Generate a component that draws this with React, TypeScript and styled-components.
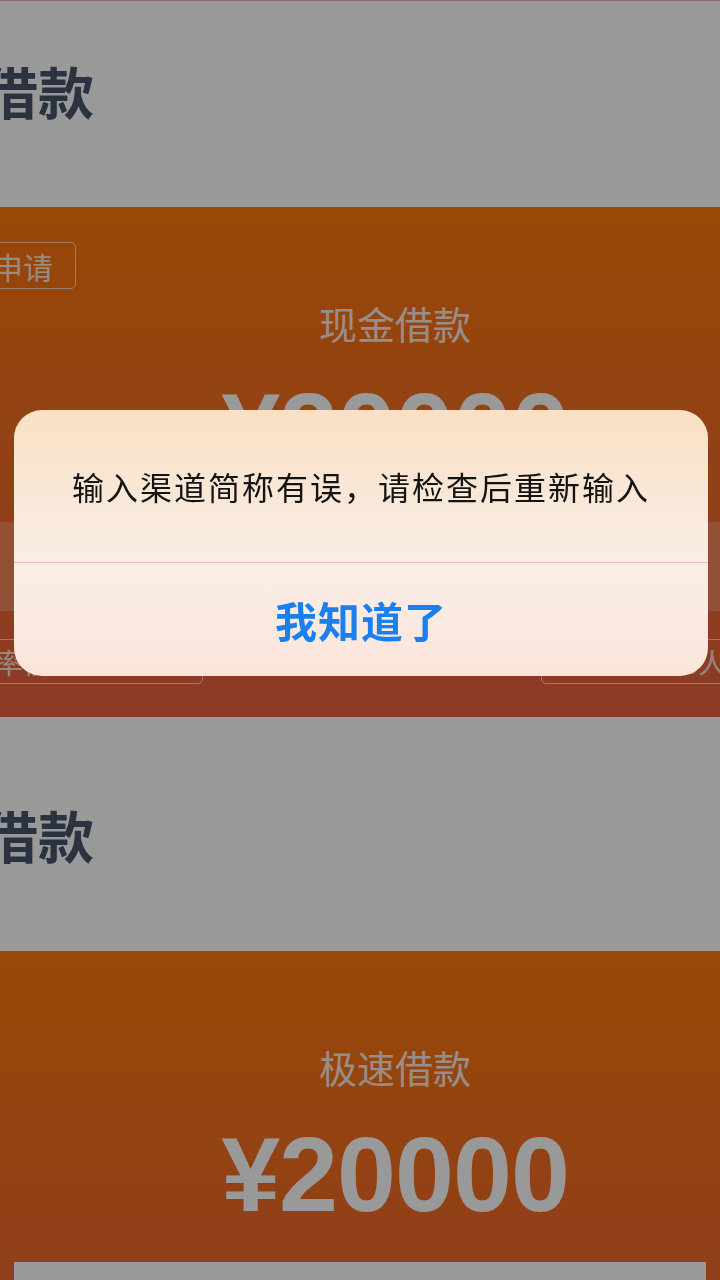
import React from 'react'
import styled, { createGlobalStyle } from 'styled-components'

const GlobalStyle = createGlobalStyle`
  html, body {
    margin: 0;
    padding: 0;
    width: 720px;
    overflow: hidden;
    background: #fff;
    font-family: "Noto Sans CJK SC", "Noto Sans", sans-serif;
  }
`

const Page = styled.div`
  width: 720px;
  margin-top: -27px;
  overflow: hidden;
`

const Section = styled.div`
  height: 234px;
  display: flex;
  align-items: center;
  background: #fff;
`

const Title = styled.h1`
  margin: 0 0 0 -130px;
  font-size: 56px;
  font-weight: 700;
  line-height: 1.2;
  color: #4a566b;
  white-space: nowrap;
`

const Card = styled.div<{ $full?: boolean }>`
  position: relative;
  overflow: hidden;
  padding: 91px 0 ${(p) => (p.$full ? '33px' : '0')};
  background: linear-gradient(180deg, #ff780a 0, #e86141 511px);
  ${(p) => (p.$full ? '' : 'height: 420px; box-sizing: border-box;')}
`

const Badge = styled.span`
  position: absolute;
  top: 35px;
  left: -90px;
  height: 45px;
  padding: 0 22px;
  display: flex;
  align-items: center;
  border: 1px solid rgba(255, 255, 255, 0.7);
  border-radius: 5px;
  font-size: 30px;
  color: rgba(255, 255, 255, 0.85);
  white-space: nowrap;
`

const Center = styled.div`
  padding-left: 70px;
  display: flex;
  flex-direction: column;
  align-items: center;
`

const Name = styled.div`
  font-size: 38px;
  line-height: 50px;
  color: rgba(255, 255, 255, 0.88);
`

const Amount = styled.div`
  margin-top: 29px;
  font-family: "Liberation Sans", Arial, sans-serif;
  font-size: 106px;
  font-weight: 700;
  line-height: 1;
  color: #fff;
  letter-spacing: -1px;
`

const Band = styled.div`
  margin-top: 39px;
  height: 89px;
  background: rgba(255, 255, 255, 0.2);
`

const Panel = styled.div`
  margin: 35px 14px 0;
  height: 120px;
  background: #fff;
`

const TagRow = styled.div`
  margin: 28px 0 0 -60px;
  display: flex;
  gap: 338px;
`

const Tag = styled.div<{ $w: number; $align: string; $pad: number }>`
  flex: none;
  width: ${(p) => p.$w}px;
  height: 45px;
  box-sizing: border-box;
  padding: 0 ${(p) => p.$pad}px;
  display: flex;
  align-items: center;
  justify-content: ${(p) => p.$align};
  border: 1px solid rgba(255, 255, 255, 0.7);
  border-radius: 5px;
  font-size: 28px;
  color: rgba(255, 255, 255, 0.8);
  white-space: nowrap;
`

const Mask = styled.div`
  position: fixed;
  inset: 0;
  background: rgba(0, 0, 0, 0.4);
  border-top: 1px solid #8a6e60;
`

const Alert = styled.div`
  position: fixed;
  top: 410px;
  left: 14px;
  width: 694px;
  border-radius: 28px;
  overflow: hidden;
  background: linear-gradient(
    180deg,
    #fae0c3 0%,
    #f9e7d6 30%,
    #f9eee4 55%,
    #faece4 72%,
    #fbe4da 100%
  );
`

const Message = styled.div`
  height: 152px;
  display: flex;
  align-items: center;
  justify-content: center;
  font-size: 32px;
  letter-spacing: 2px;
  color: #141414;
  border-bottom: 1px solid #e6bda8;
`

const OkButton = styled.button`
  display: block;
  width: 100%;
  height: 113px;
  border: none;
  background: transparent;
  font-family: "Noto Sans CJK SC", sans-serif;
  font-size: 42px;
  font-weight: 700;
  letter-spacing: 1px;
  color: #1a80f0;
  cursor: pointer;
`

export default function App() {
  return (
    <>
      <GlobalStyle />
      <Page>
        <Section>
          <Title>现金借款</Title>
        </Section>
        <Card $full>
          <Badge>立即申请</Badge>
          <Center>
            <Name>现金借款</Name>
            <Amount>¥20000</Amount>
          </Center>
          <Band />
          <TagRow>
            <Tag $w={263} $align="flex-start" $pad={26}>
              利率低至0.02%
            </Tag>
            <Tag $w={240} $align="center" $pad={0}>
              已有356人
            </Tag>
          </TagRow>
        </Card>
        <Section>
          <Title>极速借款</Title>
        </Section>
        <Card>
          <Center>
            <Name>极速借款</Name>
            <Amount>¥20000</Amount>
          </Center>
          <Panel />
        </Card>
      </Page>
      <Mask />
      <Alert>
        <Message>输入渠道简称有误，请检查后重新输入</Message>
        <OkButton>我知道了</OkButton>
      </Alert>
    </>
  )
}
